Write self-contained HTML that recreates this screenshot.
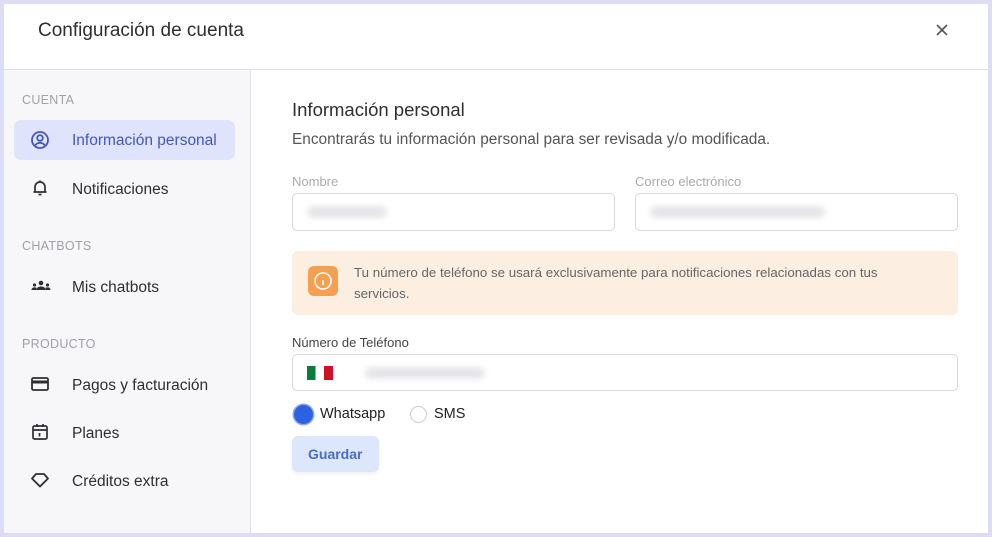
<!DOCTYPE html>
<html><head><meta charset="utf-8"><style>
*{box-sizing:border-box;margin:0;padding:0}
body{width:992px;height:537px;background:#dcdcf4;font-family:"Liberation Sans",sans-serif;overflow:hidden;position:relative}
.win{position:absolute;left:4px;top:4px;width:984px;height:529px;background:#fff}
.hdr{position:absolute;left:0;top:0;width:984px;height:66px;border-bottom:1px solid #e2e2e6}
.hdr h1{position:absolute;left:34px;top:16px;font-size:19px;font-weight:normal;color:#2e2e33}
.x{position:absolute;left:930px;top:18px}
.side{position:absolute;left:0;top:66px;width:247px;height:463px;background:#f7f7fa;border-right:1px solid #e2e2e6}
.sec{position:absolute;left:18px;font-size:12.5px;color:#a0a0a8;letter-spacing:.3px}
.item{position:absolute;left:10px;width:221px;height:40px;border-radius:7px;font-size:15.5px;color:#2e2e33}
.item span{position:absolute;left:58px;top:11px}
.item svg{position:absolute;left:16px;top:10px}
.act{background:#dfe3fb;color:#4358b8}
.main{position:absolute;left:248px;top:66px}
.t{position:absolute;white-space:nowrap}
.inp{position:absolute;border:1px solid #d8d8dc;border-radius:5px;height:38px;background:#fff}
.blur{position:absolute;height:12px;border-radius:6px;background:#e6e6ea;filter:blur(3px)}
</style></head><body>
<div class="win">
<div class="hdr"><h1>Configuración de cuenta</h1>
<svg class="x" width="16" height="16" viewBox="0 0 16 16"><path d="M3 3L13 13M13 3L3 13" stroke="#555" stroke-width="1.6"/></svg></div>
<div class="side">
<div class="sec" style="top:23px">CUENTA</div>
<div class="item act" style="top:50px"><svg width="20" height="20" viewBox="0 0 20 20" fill="none" stroke="#4358b8" stroke-width="1.8"><circle cx="10" cy="10" r="8"/><circle cx="10" cy="8" r="2.8"/><path d="M5 15.5c1.5-2 3-2.6 5-2.6s3.5.6 5 2.6"/></svg><span style="top:12px">Información personal</span></div>
<div class="item" style="top:98px"><svg width="20" height="20" viewBox="0 0 20 20" fill="none" stroke="#2e2e33" stroke-width="1.7"><path d="M5 14V9a5 5 0 0110 0v5H5zM3.5 14h13M8.5 16.5h3M10 2.5v1.5"/></svg><span style="top:13px">Notificaciones</span></div>
<div class="sec" style="top:169px">CHATBOTS</div>
<div class="item" style="top:196px"><svg width="22" height="20" viewBox="0 0 22 20" fill="#2e2e33"><circle cx="11" cy="7" r="2.3"/><path d="M6.5 14c0-2.5 2-3.5 4.5-3.5s4.5 1 4.5 3.5z"/><circle cx="4.5" cy="9" r="1.6"/><circle cx="17.5" cy="9" r="1.6"/><path d="M1.5 14c0-1.8 1.2-2.6 3-2.6s2 .5 2 .5v2.1z M20.5 14c0-1.8-1.2-2.6-3-2.6s-2 .5-2 .5v2.1z"/></svg><span style="top:13px">Mis chatbots</span></div>
<div class="sec" style="top:267px">PRODUCTO</div>
<div class="item" style="top:294px"><svg width="20" height="20" viewBox="0 0 20 20" fill="none" stroke="#2e2e33" stroke-width="1.8"><rect x="2" y="4" width="16" height="12" rx="1.5"/><path d="M2 8h16" stroke-width="3"/></svg><span style="top:13px">Pagos y facturación</span></div>
<div class="item" style="top:342px"><svg width="20" height="20" viewBox="0 0 20 20" fill="none" stroke="#2e2e33" stroke-width="1.7"><rect x="3" y="4" width="14" height="13" rx="1.5"/><path d="M3 8h14M7 2v3M13 2v3M9.5 11v3.5"/></svg><span style="top:13px">Planes</span></div>
<div class="item" style="top:390px"><svg width="20" height="20" viewBox="0 0 20 20" fill="none" stroke="#2e2e33" stroke-width="1.8" stroke-linejoin="round"><path d="M6 4h8l4 4.5-8 8-8-8z"/></svg><span style="top:13px">Créditos extra</span></div>
</div>
<div class="main">
<div class="t" style="left:40px;top:29px;font-size:18.5px;color:#2e2e33">Información personal</div>
<div class="t" style="left:40px;top:61px;font-size:15.4px;color:#555">Encontrarás tu información personal para ser revisada y/o modificada.</div>
<div class="t" style="left:40px;top:104px;font-size:13px;color:#aaa">Nombre</div>
<div class="t" style="left:383px;top:104px;font-size:13px;color:#aaa">Correo electrónico</div>
<div class="inp" style="left:40px;top:123px;width:323px"><div class="blur" style="left:14px;top:12px;width:80px"></div></div>
<div class="inp" style="left:383px;top:123px;width:323px"><div class="blur" style="left:14px;top:12px;width:175px"></div></div>
<div style="position:absolute;left:40px;top:181px;width:666px;height:64px;background:#fdeee2;border-radius:6px">
<div style="position:absolute;left:16px;top:15px;width:30px;height:30px;border-radius:6px;background:#f6a04f"><svg width="30" height="30" viewBox="0 0 30 30" fill="none" stroke="#fff" stroke-width="1.6"><circle cx="15" cy="15" r="8"/><path d="M15 14v5M15 11v.5"/></svg></div>
<div class="t" style="left:62px;top:11px;font-size:13.3px;color:#666;line-height:21px;white-space:normal;width:545px">Tu número de teléfono se usará exclusivamente para notificaciones relacionadas con tus servicios.</div></div>
<div class="t" style="left:40px;top:265px;font-size:13px;color:#444">Número de Teléfono</div>
<div class="inp" style="left:40px;top:284px;width:666px;height:37px">
<div style="position:absolute;left:14px;top:11px;width:26px;height:14px;background:linear-gradient(90deg,#0b7a3e 33%,#fff 33% 66%,#ce1126 66%)"></div>
<div class="blur" style="left:72px;top:12px;width:120px"></div></div>
<div style="position:absolute;left:42px;top:335px;width:19px;height:19px;border-radius:50%;background:#2c62e0;box-shadow:0 0 0 1.5px #8ea8f0"></div>
<div class="t" style="left:68px;top:336px;font-size:14.5px;color:#222">Whatsapp</div>
<div style="position:absolute;left:158px;top:336px;width:17px;height:17px;border-radius:50%;border:1px solid #ccc;background:#fff"></div>
<div class="t" style="left:182px;top:336px;font-size:14.5px;color:#222">SMS</div>
<div style="position:absolute;left:40px;top:366px;width:87px;height:36px;border-radius:6px;background:#dce7fb;box-shadow:0 2px 4px rgba(0,0,0,.06)"><div class="t" style="left:16px;top:10px;font-size:14px;font-weight:bold;color:#4a6cc4">Guardar</div></div>
</div>
</div>
</body></html>
